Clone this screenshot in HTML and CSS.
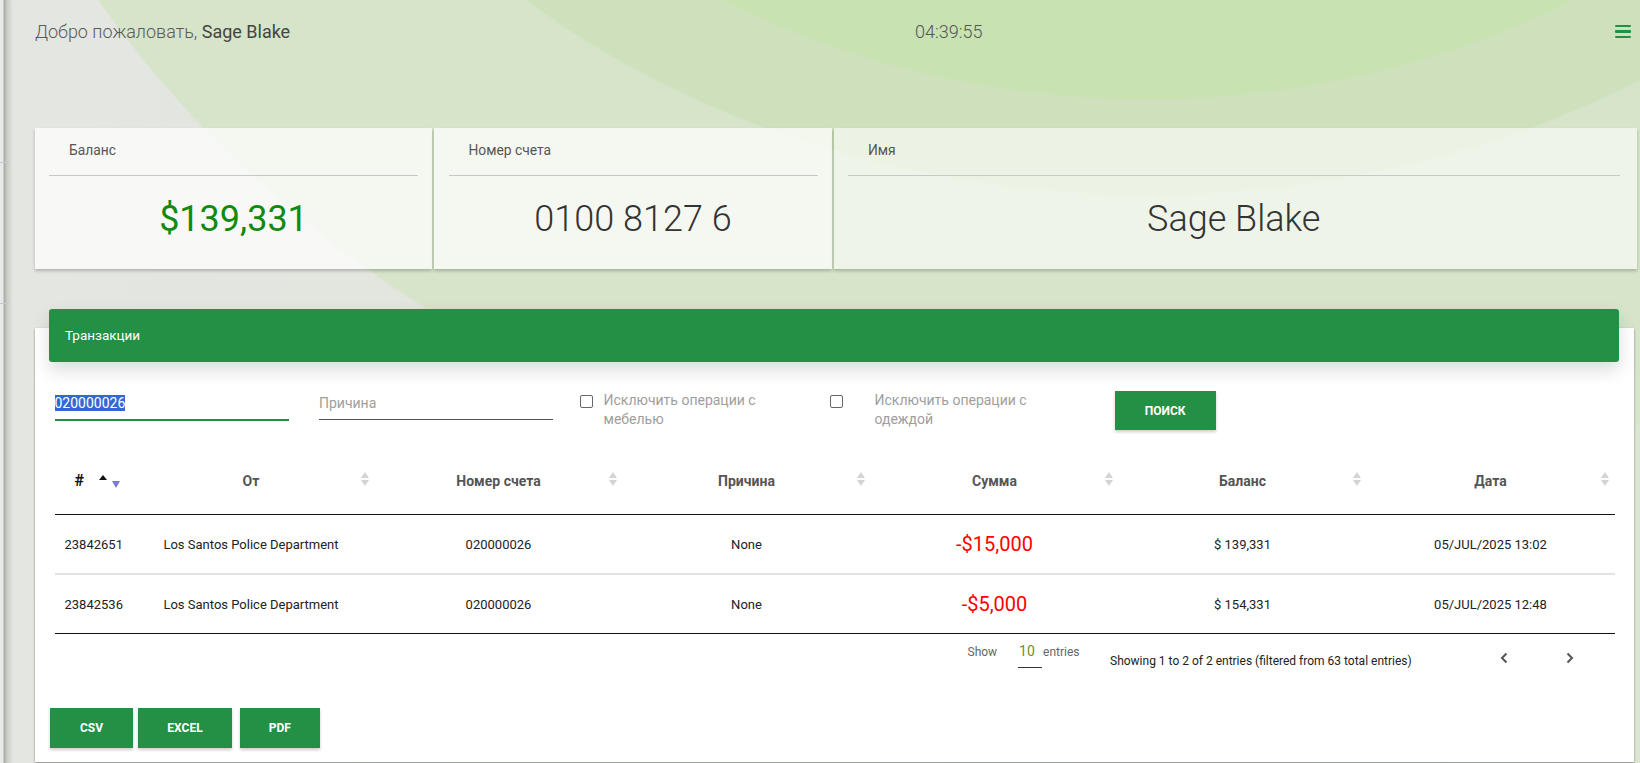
FILE: index.html
```html
<!DOCTYPE html>
<html lang="ru">
  <head>
    <meta charset="UTF-8" />
    <meta name="viewport" content="width=device-width, initial-scale=1.0" />
    <title>Банк: личный кабинет</title>
    <link rel="stylesheet" href="styles.css">
  </head>
  <body>
    <div class="side-strip"></div>

    <div class="page">
      <!-- верхняя строка -->
      <div class="topbar">
        <div class="welcome">Добро пожаловать, <span class="welcome-name">Sage Blake</span></div>
        <div class="clock">04:39:55</div>
        <button class="menu-btn" aria-label="menu"><span></span><span></span><span></span></button>
      </div>

      <!-- карточки счёта -->
      <div class="stats">
        <div class="stat">
          <div class="stat-label">Баланс</div>
          <div class="stat-value stat-value--money">$139,331</div>
        </div>
        <div class="stat">
          <div class="stat-label">Номер счета</div>
          <div class="stat-value">0100 8127 6</div>
        </div>
        <div class="stat stat--wide">
          <div class="stat-label">Имя</div>
          <div class="stat-value">Sage Blake</div>
        </div>
      </div>

      <!-- транзакции -->
      <div class="panel">
        <div class="panel-head">Транзакции</div>

        <div class="filters">
          <div class="field field--active"><span class="selected">020000026</span></div>
          <div class="field field--placeholder">Причина</div>
          <label class="check check--first">
            <span class="box"></span>
            <span class="check-text">Исключить операции с мебелью</span>
          </label>
          <label class="check check--second">
            <span class="box"></span>
            <span class="check-text">Исключить операции с одеждой</span>
          </label>
          <button class="btn btn--search">Поиск</button>
        </div>

        <table class="tx-table">
          <colgroup>
            <col style="width: 73px">
            <col style="width: 247px">
            <col style="width: 248px">
            <col style="width: 248px">
            <col style="width: 248px">
            <col style="width: 248px">
            <col style="width: 248px">
          </colgroup>
          <thead>
            <tr>
              <th class="th-id">#<span class="sort-asc"></span><span class="sort-desc"></span></th>
              <th class="sortable">От</th>
              <th class="sortable">Номер счета</th>
              <th class="sortable">Причина</th>
              <th class="sortable">Сумма</th>
              <th class="sortable">Баланс</th>
              <th class="sortable">Дата</th>
            </tr>
          </thead>
          <tbody>
            <tr>
              <td>23842651</td>
              <td>Los Santos Police Department</td>
              <td>020000026</td>
              <td>None</td>
              <td class="amount">-$15,000</td>
              <td>$ 139,331</td>
              <td>05/JUL/2025 13:02</td>
            </tr>
            <tr>
              <td>23842536</td>
              <td>Los Santos Police Department</td>
              <td>020000026</td>
              <td>None</td>
              <td class="amount">-$5,000</td>
              <td>$ 154,331</td>
              <td>05/JUL/2025 12:48</td>
            </tr>
          </tbody>
        </table>

        <div class="table-foot">
          <div class="length">
            <span>Show</span>
            <span class="length-select">10</span>
            <span>entries</span>
          </div>
          <div class="info">Showing 1 to 2 of 2 entries (filtered from 63 total entries)</div>
          <div class="pager">
            <svg class="pager-btn" width="8" height="12" viewBox="0 0 8 12"><path d="M6.5 1.5 2 6l4.5 4.5" fill="none" stroke="#555" stroke-width="2"/></svg>
            <svg class="pager-btn" width="8" height="12" viewBox="0 0 8 12"><path d="M1.5 1.5 6 6l-4.5 4.5" fill="none" stroke="#555" stroke-width="2"/></svg>
          </div>
        </div>

        <div class="exports">
          <button class="btn btn--csv">CSV</button>
          <button class="btn btn--excel">Excel</button>
          <button class="btn btn--pdf">PDF</button>
        </div>
      </div>
    </div>
  </body>
</html>
```

FILE: styles.css
```css
:root {
  --green: #249046;
  --money-green: #118a11;
  --text: #555;
  --muted: #9e9e9e;
}

html, body {
  height: 100%;
}

body {
  margin: 0;
  display: flex;
  font-family: Roboto, "Noto Sans", sans-serif;
  color: var(--text);
  overflow: hidden;
  /* фон с большими дугами */
  background-color: #e2e6de;
  background-image:
    radial-gradient(ellipse 804px 654px at 1148px -554px, #c8e2b2 99.7%, transparent 100%),
    radial-gradient(ellipse 926px 750px at 1148px -554px, #cfe0bc 99.7%, transparent 100%),
    radial-gradient(ellipse 1230px 1067px at 1148px -554px, #d6e4c9 99.8%, transparent 100%),
    linear-gradient(100deg, #e4e6e2 0%, #e1e6dc 40%, #dbe5d2 100%);
  background-repeat: no-repeat;
}

/* свернутая боковая панель */
.side-strip {
  width: 13px;
  flex: none;
  background:
    linear-gradient(#c8c8c8, #c8c8c8) 0 162px / 9px 1px no-repeat,
    linear-gradient(#c8c8c8, #c8c8c8) 0 303px / 9px 1px no-repeat,
    linear-gradient(90deg, #e9eae8 0, #e9eae8 3px, #a9aba6 4px, #c9ccc5 7px, rgba(224, 228, 218, 0) 13px);
}

.page {
  flex: 1;
  padding: 0 3px 0 21.5px;
}

/* --- верхняя строка --- */
.topbar {
  display: grid;
  grid-template-columns: 880px 1fr auto;
  align-items: center;
  height: 63px;
  padding-left: 0.5px;
  margin-right: 6px;
}

.welcome {
  font-size: 18px;
  font-weight: 300;
  color: #5a5a5a;
}

.welcome-name {
  font-weight: 400;
  color: #444;
}

.clock {
  font-size: 18px;
  font-weight: 300;
  color: #555;
}

.menu-btn {
  display: flex;
  flex-direction: column;
  gap: 3px;
  width: 16px;
  padding: 0;
  border: 0;
  background: none;
}

.menu-btn span {
  height: 2.6px;
  background: var(--green);
  border-radius: 1px;
}

/* --- карточки --- */
.stats {
  display: flex;
  gap: 2px;
  margin-top: 64.5px;
}

.stat {
  width: 397.5px;
  height: 141px;
  padding: 12px 14px 0 14.5px;
  box-sizing: border-box;
  background: rgba(255, 255, 255, 0.74);
  box-shadow: 0 2px 3px rgba(0, 0, 0, 0.22);
}

.stat--wide {
  width: 803px;
  padding-right: 17px;
  background: rgba(255, 255, 255, 0.6);
}

.stat-label {
  font-size: 13.8px;
  line-height: 20px;
  padding: 0 20px 15px;
  border-bottom: 1px solid #c8c8c8;
  color: #555;
}

.stat-value {
  margin-top: 22px;
  font-size: 36px;
  line-height: 42px;
  font-weight: 300;
  text-align: center;
  color: #333;
}

.stat-value--money {
  color: var(--money-green);
  font-weight: 400;
}

/* --- панель транзакций --- */
.panel {
  width: 1599.5px;
  margin-top: 59px;
  height: 434px;
  padding: 0 15px 0 14.5px;
  box-sizing: border-box;
  background: #fff;
  box-shadow: 0 1px 2px rgba(0, 0, 0, 0.45);
}

.panel-head {
  position: relative;
  top: -18.5px;
  margin-bottom: -18.5px;
  height: 53px;
  padding-left: 16px;
  line-height: 53px;
  font-size: 13.5px;
  color: #fff;
  background: var(--green);
  border-radius: 3px;
  box-shadow: 0 8px 18px rgba(0, 0, 0, 0.14);
}

.filters {
  display: flex;
  align-items: flex-start;
  height: 97px;
  padding: 29px 0 0 5.5px;
  box-sizing: border-box;
}

.field {
  width: 234px;
  height: 30px;
  box-sizing: border-box;
  padding-top: 3px;
  font-size: 14px;
  line-height: 18px;
  border-bottom: 1px solid #555;
}

.field--active {
  margin-right: 30.5px;
  border-bottom: 2px solid var(--green);
  color: #222;
}

.selected {
  background: #3368d2;
  color: #fff;
}

.field--placeholder {
  height: 29px;
  margin-right: 26.5px;
  color: var(--muted);
}

.check {
  display: flex;
  align-items: flex-start;
  font-size: 14px;
  line-height: 19px;
  color: var(--muted);
}

.check--first {
  width: 250px;
}

.check--second {
  width: 285.5px;
}

.check--first .box {
  margin-right: 11px;
}

.check--second .box {
  margin-right: 32px;
}

.box {
  flex: none;
  width: 11px;
  height: 11px;
  margin-top: 3.5px;
  border: 1px solid #666;
  border-radius: 2px;
}

.check-text {
  width: 200px;
}

.btn {
  border: 0;
  background: var(--green);
  color: #fff;
  font-family: Roboto, sans-serif;
  font-size: 12px;
  font-weight: 700;
  text-transform: uppercase;
  box-shadow: 0 2px 3px rgba(0, 0, 0, 0.2);
}

.btn--search {
  width: 100.5px;
  height: 39px;
}

/* --- таблица --- */
.tx-table {
  width: 1560px;
  margin: 0 5.5px;
  border-collapse: collapse;
  table-layout: fixed;
  font-size: 13px;
  color: #222;
}

.tx-table th {
  position: relative;
  padding: 13px 10px 24px;
  font-size: 14px;
  line-height: 18px;
  font-weight: 700;
  color: #555;
  border-bottom: 1px solid #111;
}

.tx-table td {
  height: 58px;
  padding: 0 10px;
  text-align: center;
  border-bottom: 2px solid #e3e3e3;
}

.tx-table tbody tr:last-child td {
  border-bottom: 1px solid #111;
}

.tx-table td.amount {
  font-size: 20px;
  color: #ff0000;
}

/* стрелки сортировки */
.sortable::before,
.sortable::after {
  content: '';
  position: absolute;
  right: 6px;
  border-left: 4px solid transparent;
  border-right: 4px solid transparent;
}

.sortable::before {
  top: 13px;
  border-bottom: 6px solid #d4d4d4;
}

.sortable::after {
  top: 21px;
  border-top: 6px solid #d4d4d4;
}

.tx-table th.th-id {
  padding-left: 20px;
  padding-right: 0;
  text-align: left;
  font-size: 16px;
  color: #111;
}

.sort-asc,
.sort-desc {
  display: inline-block;
  width: 0;
  height: 0;
  border-left: 4px solid transparent;
  border-right: 4px solid transparent;
  vertical-align: middle;
  position: relative;
}

.sort-asc {
  margin-left: 15px;
  border-bottom: 5px solid #111;
  top: -4px;
}

.sort-desc {
  margin-left: 5px;
  border-top: 7px solid #7c7ccf;
  top: 3px;
}

/* --- низ таблицы --- */
.table-foot {
  display: flex;
  align-items: flex-start;
  height: 74px;
  padding-left: 918.5px;
  font-size: 12px;
}

.length {
  display: flex;
  width: 142.5px;
  padding-top: 10.5px;
  color: #666;
}

.length-select {
  width: 23px;
  margin: -1px 1px 0 21px;
  padding: 0 0 9px 1px;
  font-size: 14px;
  line-height: 14px;
  color: #6f8f1c;
  border-bottom: 1px solid #333;
}

.info {
  width: 390px;
  padding-top: 20px;
  color: #222;
}

.pager {
  display: flex;
  gap: 58px;
  padding-top: 18px;
}

.exports {
  display: flex;
  gap: 5px;
  margin-left: 1px;
}

.exports .btn {
  height: 40px;
}

.btn--csv {
  width: 83px;
}

.btn--excel {
  width: 94px;
}

.btn--pdf {
  width: 80.5px;
  margin-left: 2.5px;
}
```
